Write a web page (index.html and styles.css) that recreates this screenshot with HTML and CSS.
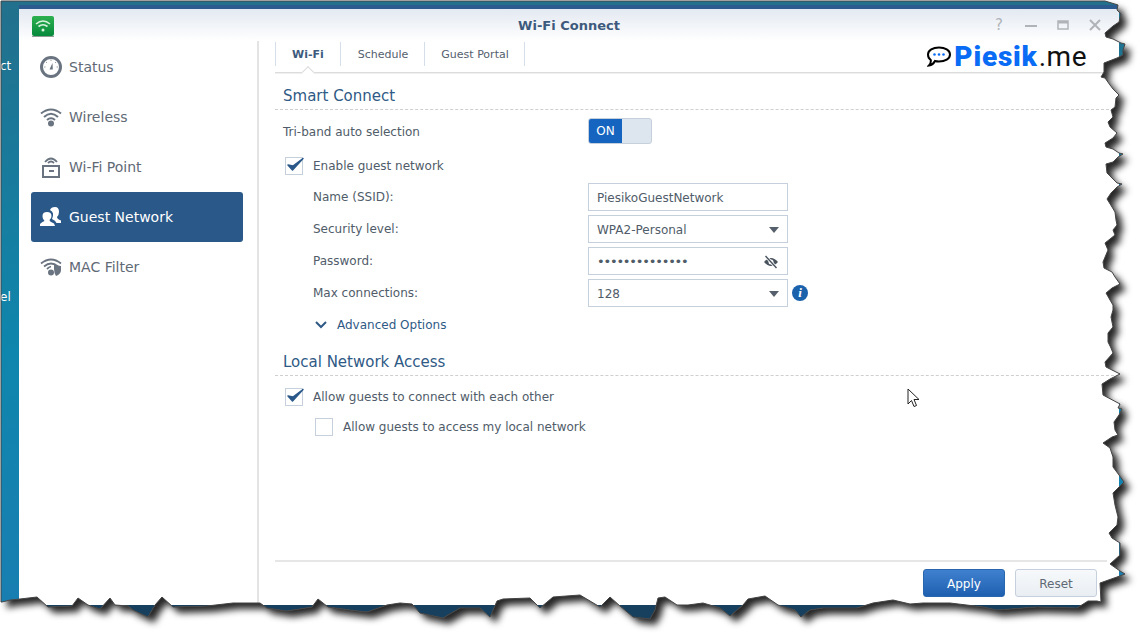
FILE: index.html
```html
<!DOCTYPE html>
<html lang="en">
<head>
    <meta charset="UTF-8">
    <title>Wi-Fi Connect</title>
    <meta name="viewport" content="width=device-width, initial-scale=1.0">
    <link rel="stylesheet" href="styles.css">
</head>
<body>
    <div class="desktop">
        <span class="desk-label desk-label-a">ct</span>
        <span class="desk-label desk-label-b">el</span>

        <div class="window">
            <div class="titlebar">
                <svg class="app-icon" width="22" height="21" viewBox="0 0 22 21">
                    <defs>
                        <linearGradient id="appGreen" x1="0" y1="0" x2="0" y2="1">
                            <stop offset="0" stop-color="#2cb04f"/>
                            <stop offset="1" stop-color="#068a3c"/>
                        </linearGradient>
                    </defs>
                    <rect width="22" height="20" y="0" rx="2" fill="url(#appGreen)"/>
                    <rect width="22" height="1" y="20" fill="#8f9c94"/>
                    <path d="M4 8 Q11 2 18 8 M6.5 10.5 Q11 7 15.500 10.500" fill="none" stroke="#d9f2de" stroke-width="1.600"/>
                    <circle cx="11" cy="14" r="1.500" fill="#d9f2de"/>
                </svg>
                <span class="title">Wi-Fi Connect</span>
                <div class="win-buttons">
                    <span class="win-help">?</span>
                    <svg width="12" height="12" viewBox="0 0 12 12"><rect x="0" y="6" width="12" height="2" fill="#b0b4b9"/></svg>
                    <svg width="12" height="12" viewBox="0 0 12 12"><rect x="1" y="2" width="10" height="8" fill="none" stroke="#b0b4b9" stroke-width="1.500"/><rect x="1" y="2" width="10" height="2.500" fill="#b0b4b9"/></svg>
                    <svg width="12" height="12" viewBox="0 0 12 12"><path d="M1 1 L11 11 M11 1 L1 11" stroke="#b0b4b9" stroke-width="2"/></svg>
                </div>
            </div>

            <div class="win-body">
                <nav class="sidebar">
                    <a class="nav-item">
                        <svg width="22" height="22" viewBox="0 0 22 22">
                            <circle cx="11" cy="11" r="9.500" fill="none" stroke="#6a7480" stroke-width="3"/>
                            <path d="M9.500 13.500 L12.500 7 L12.800 13.500 Z" fill="#6a7480"/>
                            <path d="M11 3.500 V5 M4 11 H5.500 M18 11 H16.500 M6 6 L7 7 M16 6 L15 7" stroke="#9aa2aa"/>
                        </svg>
                        <span>Status</span>
                    </a>
                    <a class="nav-item">
                        <svg width="22" height="20" viewBox="0 0 22 20">
                            <path d="M1 6.500 Q11 -1.500 21 6.500 M4 10 Q11 3.500 18 10 M7 13 Q11 9.500 15 13" fill="none" stroke="#6a7480" stroke-width="2"/>
                            <circle cx="11" cy="16.500" r="3" fill="#6a7480"/>
                        </svg>
                        <span>Wireless</span>
                    </a>
                    <a class="nav-item">
                        <svg width="22" height="24" viewBox="0 0 22 24">
                            <path d="M5 7 Q11 0 17 7 M8 8 Q11 5 14 8" fill="none" stroke="#6a7480" stroke-width="1.800"/>
                            <rect x="3" y="11" width="16" height="11" fill="#fff" stroke="#6a7480" stroke-width="2"/>
                            <rect x="9" y="15" width="5" height="2" fill="#6a7480"/>
                        </svg>
                        <span>Wi-Fi Point</span>
                    </a>
                    <a class="nav-item nav-active">
                        <svg width="22" height="20" viewBox="0 0 22 20">
                            <path d="M10 3 Q11 0 15 0 Q19 0 19 5 Q19 8 17 10 Q17 12 21 13.500 V16 H16.500 Q15.500 13.500 12 12 Q13.500 9 13 6.500 Q12.500 4 10 3 Z" fill="#fff"/>
                            <path d="M7 5 Q11.500 5 11.500 9 Q11.500 11.500 9.500 13 Q9.500 14.500 14 16.500 L15 19 H0 V17.500 Q0 16 4.500 14 Q4.500 13.500 3.500 12.500 Q2.500 11 2.500 9 Q2.500 5 7 5 Z" fill="#fff"/>
                        </svg>
                        <span>Guest Network</span>
                    </a>
                    <a class="nav-item">
                        <svg width="22" height="20" viewBox="0 0 22 20">
                            <path d="M1 6.500 Q11 -1.500 21 6.500 M4 9.500 Q11 3.500 18 9.500 M7 12 Q9 10 11 9.500" fill="none" stroke="#6a7480" stroke-width="1.800"/>
                            <circle cx="11" cy="15.500" r="3" fill="#6a7480"/>
                            <path d="M14 8 L21 9 V13 Q21 17 16 19 Q14 16 14 12 Z" fill="#6a7480"/>
                        </svg>
                        <span>MAC Filter</span>
                    </a>
                </nav>

                <main class="main">
                    <div class="tabs">
                        <span class="tab tab-active">Wi-Fi</span>
                        <span class="tab">Schedule</span>
                        <span class="tab">Guest Portal</span>
                    </div>

                    <h2 class="section-title">Smart Connect</h2>
                    <div class="row row-switch">
                        <label class="field-label field-label-top">Tri-band auto selection</label>
                        <div class="switch"><span class="switch-on">ON</span></div>
                    </div>

                    <div class="check-row check-enable">
                        <span class="checkbox">
                            <svg width="20" height="18" viewBox="0 0 20 18"><path d="M3 9 L7.500 14 L18 2.500 L8 10 Z" fill="#2a5889" stroke="#2a5889" stroke-width="1.500" stroke-linejoin="round"/></svg>
                        </span>
                        <span>Enable guest network</span>
                    </div>

                    <div class="fields">
                        <div class="row">
                            <label class="field-label">Name (SSID):</label>
                            <div class="input">PiesikoGuestNetwork</div>
                        </div>
                        <div class="row">
                            <label class="field-label">Security level:</label>
                            <div class="input">WPA2-Personal<i class="caret"></i></div>
                        </div>
                        <div class="row">
                            <label class="field-label">Password:</label>
                            <div class="input">
                                <span class="dots">••••••••••••••</span>
                                <svg width="16" height="14" viewBox="0 0 16 14">
                                    <path d="M1 7 Q8 -1 15 7 Q8 15 1 7 Z" fill="#4a545f"/>
                                    <circle cx="8" cy="7" r="2.500" fill="#fff"/>
                                    <path d="M2.500 1 L13.500 13" stroke="#fff" stroke-width="3"/>
                                    <path d="M2.500 1 L13.500 13" stroke="#4a545f" stroke-width="1.400"/>
                                </svg>
                            </div>
                        </div>
                        <div class="row">
                            <label class="field-label">Max connections:</label>
                            <div class="input">128<i class="caret"></i></div>
                            <span class="info">i</span>
                        </div>
                    </div>

                    <div class="advanced">
                        <svg width="12" height="8" viewBox="0 0 12 8"><path d="M1 1 L6 6 L11 1" fill="none" stroke="#2f5a85" stroke-width="2"/></svg>
                        <span>Advanced Options</span>
                    </div>

                    <h2 class="section-title section-local">Local Network Access</h2>
                    <div class="check-row check-allow">
                        <span class="checkbox">
                            <svg width="20" height="18" viewBox="0 0 20 18"><path d="M3 9 L7.500 14 L18 2.500 L8 10 Z" fill="#2a5889" stroke="#2a5889" stroke-width="1.500" stroke-linejoin="round"/></svg>
                        </span>
                        <span>Allow guests to connect with each other</span>
                    </div>
                    <div class="check-row check-sub">
                        <span class="checkbox"></span>
                        <span>Allow guests to access my local network</span>
                    </div>

                    <div class="footer">
                        <button class="btn btn-apply">Apply</button>
                        <button class="btn btn-reset">Reset</button>
                    </div>

                    <div class="watermark">
                        <svg width="24" height="21" viewBox="0 0 24 21">
                            <path d="M12 1.500 C18 1.500 23 4 23 8.500 C23 13 18 15.500 12 15.500 C10.500 15.500 9 15.300 8 15 C7 17 5 19 2 19.500 C3.500 18 4 16 3.800 14 C2 12.800 1 10.800 1 8.500 C1 4 6 1.500 12 1.500 Z" fill="#fff" stroke="#000" stroke-width="2"/>
                            <circle cx="7.500" cy="8.500" r="1.300" fill="#0a6cf5"/>
                            <circle cx="12" cy="8.500" r="1.300" fill="#0a6cf5"/>
                            <circle cx="16.500" cy="8.500" r="1.300" fill="#0a6cf5"/>
                        </svg>
                        <span class="wm-name">Piesik</span><span class="wm-tld">.me</span>
                    </div>
                </main>
            </div>
        </div>

        <svg class="cursor" width="13" height="20" viewBox="0 0 13 20">
            <path d="M1 1 V16 L4.500 12.500 L7 18.500 L9.500 17.500 L7 11.500 L12 11.500 Z" fill="#fff" stroke="#222" stroke-width="1"/>
        </svg>

        <!-- torn paper edge of the screenshot -->
        <svg class="torn" width="1147" height="640" viewBox="0 0 1147 640">
            <defs>
                <path id="tornEdge" d="M1 1 L1105 1 L1118 5 L1117 10 L1121 14 L1119 22 L1113 26 L1105 33 L1106 37 L1113 39 L1121 43 L1125 44 L1123 50 L1123 55 L1117 58 L1104 63 L1104 72 L1101 77 L1105 78 L1110 85 L1113 89 L1119 95 L1116 98 L1115 107 L1111 110 L1113 117 L1108 122 L1110 127 L1117 133 L1113 138 L1105 143 L1106 147 L1113 149 L1119 153 L1123 154 L1118 157 L1113 162 L1106 164 L1107 173 L1112 178 L1117 183 L1122 184 L1117 187 L1111 193 L1107 199 L1112 207 L1115 212 L1116 220 L1117 225 L1113 230 L1115 235 L1105 243 L1108 250 L1103 262 L1104 268 L1112 272 L1115 277 L1120 284 L1112 288 L1106 293 L1110 300 L1113 305 L1113 310 L1111 317 L1113 327 L1108 333 L1108 342 L1111 348 L1113 353 L1105 362 L1106 367 L1120 374 L1110 379 L1102 384 L1103 395 L1120 404 L1118 408 L1122 409 L1119 415 L1114 422 L1115 430 L1118 435 L1112 437 L1103 443 L1110 448 L1113 457 L1113 467 L1119 475 L1124 482 L1119 487 L1113 493 L1115 505 L1118 517 L1117 525 L1109 533 L1112 538 L1120 543 L1120 555 L1110 564 L1120 571 L1125 574 L1117 577 L1100 583 L1101 602 L1097 601 L1088 601 L1077 608 L1037 607 L997 610 L983 607 L950 603 L923 603 L910 604 L893 600 L873 603 L857 608 L823 608 L810 610 L801 617 L795 610 L778 605 L765 596 L748 599 L743 605 L730 616 L720 608 L703 603 L688 605 L677 605 L665 597 L658 598 L655 610 L650 619 L633 617 L620 606 L610 597 L600 607 L580 595 L553 597 L540 608 L530 598 L503 599 L497 601 L490 617 L480 608 L460 608 L443 618 L420 613 L412 604 L400 603 L387 605 L367 612 L350 610 L328 607 L318 599 L312 607 L287 611 L267 608 L260 603 L233 603 L207 606 L173 607 L162 597 L155 605 L148 617 L133 610 L128 606 L115 605 L110 598 L100 609 L88 605 L78 598 L72 606 L48 607 L37 597 L20 599 L10 600 L2 602 L1 602 Z"/>
                <mask id="outside" maskUnits="userSpaceOnUse" x="0" y="0" width="1147" height="640">
                    <rect width="1147" height="640" fill="#fff"/>
                    <use href="#tornEdge" fill="#000"/>
                </mask>
                <filter id="tornBlur" x="-5%" y="-5%" width="110%" height="110%">
                    <feGaussianBlur stdDeviation="3.500"/>
                </filter>
            </defs>
            <rect width="1147" height="640" fill="#fff" mask="url(#outside)"/>
            <g mask="url(#outside)">
                <use href="#tornEdge" transform="translate(6 6)" fill="#000" fill-opacity="0.85" filter="url(#tornBlur)"/>
            </g>
            <use href="#tornEdge" fill="none" stroke="#454545" stroke-width="1"/>
        </svg>
    </div>
</body>
</html>
```

FILE: styles.css
```css
:root {
    --blue: #2a5889;
    --text: #505c69;
    --line: #c6d0dc;
}

* {
    box-sizing: border-box;
}

body {
    margin: 0;
    font-family: "DejaVu Sans", sans-serif;
    font-size: 12px;
    color: var(--text);
    background: #fff;
}

.desktop {
    position: relative;
    width: 1147px;
    height: 640px;
    padding: 9px 28px 0 19px;
    overflow: hidden;
    background: linear-gradient(180deg, #22708c 0%, #0f86ad 55%, #1a7db2 100%);
}

.desk-label {
    position: absolute;
    left: 0;
    width: 19px;
    text-align: right;
    color: #fff;
    font-size: 12px;
    line-height: 14px;
    padding-right: 12px;
}

.desk-label-a {
    top: 59px;
}

.desk-label-b {
    top: 290px;
}

.window {
    position: relative;
    width: 1100px;
    height: 596px;
    display: flex;
    flex-direction: column;
    background: #fff;
    box-shadow: 0 -4px 0 #2a5a8e, 0 20px 0 #17405f;
}

.titlebar {
    position: relative;
    height: 32px;
    flex: none;
    display: flex;
    align-items: center;
    justify-content: center;
    background: linear-gradient(180deg, #e3e9f1 0%, #fff 100%);
}

.app-icon {
    position: absolute;
    left: 13px;
    top: 7px;
}

.title {
    font-weight: bold;
    font-size: 13px;
    color: #3d5a7d;
}

.win-buttons {
    position: absolute;
    right: 18px;
    top: 10px;
    display: flex;
    align-items: center;
    gap: 20px;
}

.win-help {
    font-size: 15px;
    line-height: 12px;
    width: 12px;
    text-align: center;
    color: #b0b4b9;
}

.win-body {
    flex: 1;
    display: flex;
    min-height: 0;
}

.sidebar {
    width: 240px;
    flex: none;
    padding: 1px 14px 0 12px;
    border-right: 2px solid #e4e4e4;
}

.nav-item {
    height: 50px;
    display: flex;
    align-items: center;
    padding-left: 9px;
    font-size: 14px;
    color: #5f6a76;
    border-radius: 3px;
}

.nav-item svg {
    flex: none;
    margin-right: 7px;
}

.nav-active {
    background: var(--blue);
    color: #fff;
}

.main {
    position: relative;
    flex: 1;
    min-width: 0;
    display: flex;
    flex-direction: column;
    padding-left: 16px;
}

.tabs {
    height: 32px;
    flex: none;
    display: flex;
    padding-top: 1px;
    align-items: flex-start;
    border-bottom: 1px solid #dcdcdc;
    box-shadow: 0 1px 0 #f0f0f0;
}

.tab {
    position: relative;
    height: 24px;
    line-height: 25px;
    padding: 0 16px;
    font-size: 11px;
    color: #54606e;
    border-right: 1px solid #d6dfe9;
}

.tab:first-child {
    border-left: 1px solid #d6dfe9;
}

.tab:nth-child(2) {
    padding-left: 17px;
}

.tab:nth-child(3) {
    padding-right: 15px;
}

.tab-active {
    font-weight: bold;
    color: #3d5a7d;
}

.tab-active::after {
    content: "";
    position: absolute;
    left: 27px;
    top: 24px;
    width: 9px;
    height: 9px;
    background: #fff;
    border-left: 1px solid #dcdcdc;
    border-top: 1px solid #dcdcdc;
    transform: translateY(2px) rotate(45deg);
}

.section-title {
    margin: 0;
    padding: 12px 0 2px 8px;
    font-size: 15px;
    font-weight: normal;
    line-height: 22px;
    color: #2f5a85;
    border-bottom: 1px dashed #cfcfcf;
}

.section-local {
    margin-top: 5px;
}

.row {
    height: 28px;
    display: flex;
    align-items: center;
}

.row-switch {
    height: 26px;
    margin-top: 8px;
}

.field-label {
    width: 313px;
    flex: none;
    padding-left: 38px;
}

.field-label-top {
    padding-left: 8px;
    padding-top: 1px;
}

.switch {
    width: 64px;
    height: 26px;
    border: 1px solid var(--line);
    border-radius: 3px;
    background: #dde5ee;
    overflow: hidden;
}

.switch-on {
    display: block;
    width: 33px;
    height: 24px;
    line-height: 24px;
    text-align: center;
    font-size: 12px;
    color: #fff;
    background: #1565c0;
}

.check-row {
    display: flex;
    align-items: center;
    height: 18px;
    padding-left: 10px;
}

.check-enable {
    margin-top: 13px;
}

.check-allow {
    margin-top: 12px;
}

.check-sub {
    margin-top: 12px;
    padding-left: 40px;
}

.checkbox {
    position: relative;
    width: 18px;
    height: 18px;
    flex: none;
    margin-right: 10px;
    border: 1px solid var(--line);
    background: #fff;
}

.checkbox svg {
    position: absolute;
    left: -1px;
    top: -2px;
}

.fields {
    margin-top: 8px;
    display: flex;
    flex-direction: column;
    gap: 4px;
}

.input {
    width: 200px;
    height: 28px;
    flex: none;
    display: flex;
    align-items: center;
    justify-content: space-between;
    padding: 1px 8px 0;
    border: 1px solid var(--line);
    background: #fff;
}

.dots {
    font-size: 13px;
    letter-spacing: -1.2px;
}

.caret {
    width: 0;
    height: 0;
    border-left: 5.500px solid transparent;
    border-right: 5.500px solid transparent;
    border-top: 6px solid #56606c;
}

.info {
    width: 16px;
    height: 16px;
    margin-left: 4px;
    border-radius: 50%;
    background: #1b62ad;
    color: #fff;
    font-family: "Liberation Serif", serif;
    font-style: italic;
    font-weight: bold;
    font-size: 13px;
    line-height: 16px;
    text-align: center;
}

.advanced {
    height: 18px;
    margin-top: 9px;
    padding-left: 40px;
    display: flex;
    align-items: center;
    gap: 10px;
    color: #2f5a85;
}

.footer {
    margin-top: auto;
    margin-right: 12px;
    height: 45px;
    flex: none;
    display: flex;
    justify-content: flex-end;
    align-items: flex-start;
    gap: 10px;
    padding: 7px 10px 0 0;
    border-top: 2px solid #e6e6e6;
}

.btn {
    width: 82px;
    height: 28px;
    padding: 1px 0 0;
    font-family: inherit;
    font-size: 12px;
    border-radius: 3px;
}

.btn-apply {
    color: #fff;
    border: 1px solid #2a66ae;
    background: linear-gradient(180deg, #3f81cf 0%, #1f5fb0 100%);
}

.btn-reset {
    color: #5f6a76;
    border: 1px solid var(--line);
    background: linear-gradient(180deg, #f7f9fb 0%, #e9eef3 100%);
}

.watermark {
    position: absolute;
    right: 32px;
    top: 0;
    display: flex;
    align-items: center;
    height: 30px;
    font-family: Roboto, sans-serif;
    font-size: 28px;
}

.watermark svg {
    margin-right: 3px;
}

.wm-name {
    font-weight: 900;
    letter-spacing: 0.8px;
    color: #0a6cf5;
}

.wm-tld {
    margin-left: 1px;
    font-weight: 400;
    letter-spacing: 0.5px;
    color: #111;
}

.cursor {
    position: absolute;
    left: 907px;
    top: 388px;
}

.torn {
    position: absolute;
    left: 0;
    top: 0;
}
```
